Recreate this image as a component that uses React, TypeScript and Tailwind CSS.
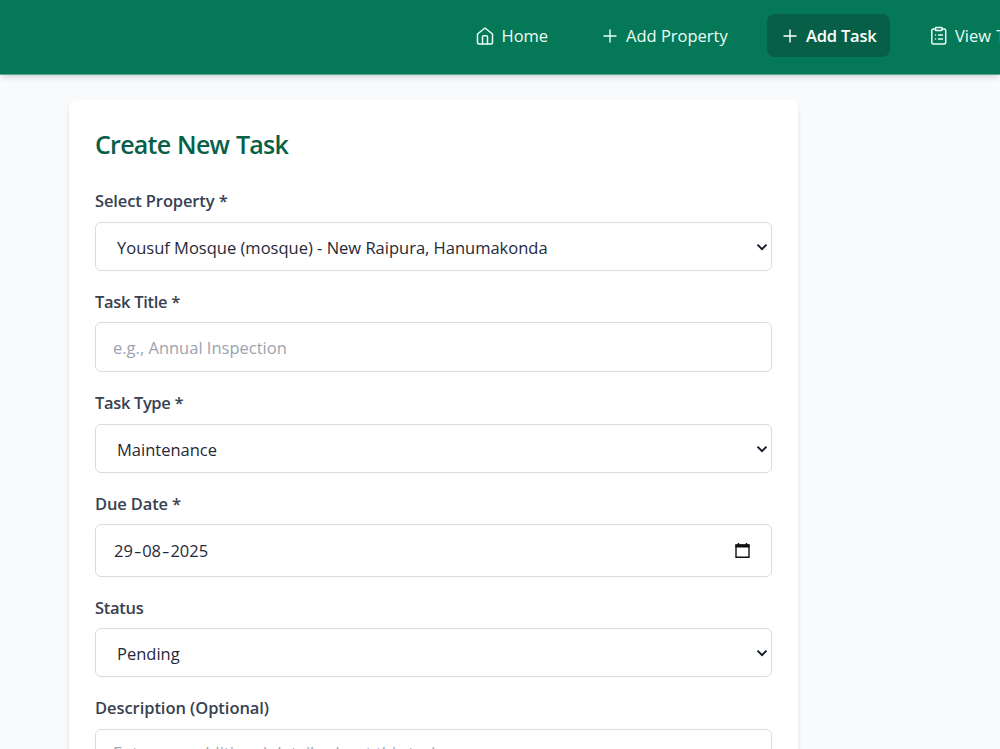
import type { ReactNode } from 'react'

interface NavItemProps {
  icon: ReactNode
  label: string
  className: string
  labelClass?: string
  active?: boolean
}

interface FieldProps {
  label: string
  className: string
  labelClass?: string
  children: ReactNode
}

const stroke = { fill: 'none', stroke: 'currentColor', strokeLinecap: 'round', strokeLinejoin: 'round' } as const

function HomeIcon() {
  return (
    <svg className="h-5 w-5 shrink-0" viewBox="0 0 20 20" strokeWidth="1.5" {...stroke}>
      <path d="M2.500 8 10 2l7.500 6v8.500a1.500 1.500 0 0 1-1.500 1.500H4a1.500 1.500 0 0 1-1.500-1.500z" />
      <path d="M7.500 18v-7.300a1 1 0 0 1 1-1h3a1 1 0 0 1 1 1V18" />
    </svg>
  )
}

function PlusIcon() {
  return (
    <svg className="h-5 w-5 shrink-0" viewBox="0 0 20 20" strokeWidth="1.4" {...stroke}>
      <path d="M10 4v12M4 10h12" />
    </svg>
  )
}

function ClipboardIcon() {
  return (
    <svg className="h-5 w-5 shrink-0" viewBox="0 0 20 20" strokeWidth="1.5" {...stroke}>
      <path d="M6.500 3H4.300A1.500 1.500 0 0 0 2.800 4.500v12A1.500 1.500 0 0 0 4.300 18h10.900a1.500 1.500 0 0 0 1.500-1.500v-12A1.500 1.500 0 0 0 15.200 3H13" />
      <path d="M7 1.500h5.500a.5.5 0 0 1 .5.5v2a.5.5 0 0 1-.5.5H7a.5.5 0 0 1-.5-.5V2a.5.5 0 0 1 .5-.5zM9.500 9h4M9.500 13h4M6.500 9h.01M6.500 13h.01" />
    </svg>
  )
}

function CalendarIcon() {
  return (
    <svg className="h-[17px] w-[17px]" viewBox="0 0 17 17" fill="none" stroke="#111111">
      <path strokeWidth="1.4" d="M2 3h13v12.200H2z" />
      <path strokeWidth="3" d="M1.500 4h14" />
      <path strokeWidth="1.5" d="M4.500 1v2M12.500 1v2" />
    </svg>
  )
}

function NavItem({ icon, label, className, labelClass = '', active }: NavItemProps) {
  return (
    <a
      className={`flex h-[43px] shrink-0 items-center gap-[6px] rounded-lg text-[16.5px] whitespace-nowrap ${active ? 'bg-[#065f46] text-white' : 'text-[#ecfdf5]'} ${className}`}
    >
      {icon}
      <span className={`pt-[2px] ${labelClass}`}>{label}</span>
    </a>
  )
}

function Field({ label, className, labelClass = '', children }: FieldProps) {
  return (
    <div className={className}>
      <label className="flex h-6 items-center text-[16.5px] font-semibold text-[#374151]">
        <span className={labelClass}>{label}</span>
      </label>
      {children}
    </div>
  )
}

const box = 'flex rounded-md border border-[#d9dbdf] bg-white text-[16.5px] text-[#1f2937]'

function SelectBox({ value, className, valueClass = '' }: { value: string; className: string; valueClass?: string }) {
  return (
    <div className={`${box} h-[49px] items-center justify-between pr-[3px] pl-[21px] ${className}`}>
      <span className={`pt-[3px] ${valueClass}`}>{value}</span>
      <svg className="h-3 w-3" viewBox="0 0 12 12" fill="none" stroke="#111827" strokeWidth="1.9">
        <path d="M1.500 3.700 6 8.200l4.500-4.500" />
      </svg>
    </div>
  )
}

function DateDash() {
  return <span className="inline-block scale-x-140 px-[2px]">-</span>
}

export default function App() {
  return (
    <div className="h-[749px] overflow-hidden bg-[#f9fafb] font-['Open_Sans',sans-serif]">
      <header className="flex h-[75px] overflow-hidden border-b border-[#5ca791] bg-[#047857] pt-[14px] pl-[475px] shadow-md">
        <NavItem icon={<HomeIcon />} label="Home" className="w-[74px]" labelClass="pl-[0.5px]" />
        <NavItem icon={<PlusIcon />} label="Add Property" className="ml-[51px] w-[129px]" />
        <NavItem
          icon={<PlusIcon />}
          label="Add Task"
          className="ml-[38px] w-[123px] pl-[12.5px]"
          labelClass="font-semibold tracking-[-0.2px] pl-[0.5px]"
          active
        />
        <NavItem icon={<ClipboardIcon />} label="View Tasks" className="ml-[39px]" labelClass="[word-spacing:1px]" />
      </header>

      <main className="pt-[25px] pl-[69px]">
        <form className="h-[720px] w-[729px] rounded-lg bg-white px-[26px] pt-[28px] shadow-md">
          <h1 className="flex h-[34px] items-center text-[25px] font-semibold tracking-[-0.75px] text-[#065f46] [word-spacing:1px]">
            Create New Task
          </h1>

          <Field label="Select Property *" className="mt-[27px]" labelClass="tracking-[-0.12px]">
            <SelectBox value="Yousuf Mosque (mosque) - New Raipura, Hanumakonda" className="mt-[9px]" />
          </Field>

          <Field label="Task Title *" className="mt-[19px]" labelClass="tracking-[-0.3px]">
            <div className={`${box} mt-2 h-[50px] items-center pt-[3px] pl-[17px]`}>
              <span className="text-[#9ca3af]">e.g., Annual Inspection</span>
            </div>
          </Field>

          <Field label="Task Type *" className="mt-[19px]" labelClass="tracking-[-0.35px]">
            <SelectBox value="Maintenance" className="mt-[9px]" />
          </Field>

          <Field label="Due Date *" className="mt-[19px]" labelClass="tracking-[-0.15px]">
            <div className={`${box} mt-2 h-[53px] items-center justify-between pr-[20px] pl-[18px]`}>
              <span className="pt-px">
                29
                <DateDash />
                08
                <DateDash />
                2025
              </span>
              <CalendarIcon />
            </div>
          </Field>

          <Field label="Status" className="mt-[19px]" labelClass="tracking-[-0.3px]">
            <SelectBox value="Pending" className="mt-2" />
          </Field>

          <Field label="Description (Optional)" className="mt-[19px]" labelClass="tracking-[-0.06px]">
            <div className={`${box} mt-[9px] h-[110px] items-start pt-[11px] pl-[17px]`}>
              <span className="text-[#9ca3af]">Enter any additional details about this task</span>
            </div>
          </Field>
        </form>
      </main>
    </div>
  )
}
